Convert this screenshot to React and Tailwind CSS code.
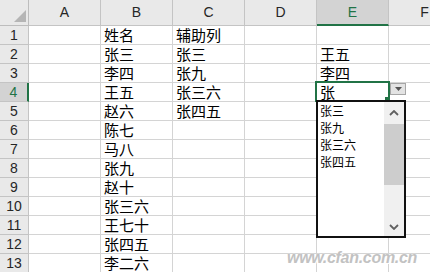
// Excel-style sheet with an open data-validation dropdown on E4
const COLS = ['A', 'B', 'C', 'D', 'E', 'F'];

const ROWS = [
  { B: '姓名', C: '辅助列' },
  { B: '张三', C: '张三', E: '王五' },
  { B: '李四', C: '张九', E: '李四' },
  { B: '王五', C: '张三六', E: '张' },
  { B: '赵六', C: '张四五' },
  { B: '陈七' },
  { B: '马八' },
  { B: '张九' },
  { B: '赵十' },
  { B: '张三六' },
  { B: '王七十' },
  { B: '张四五' },
  { B: '李二六' },
];

const OPTIONS = ['张三', '张九', '张三六', '张四五'];

const cjk = { fontFamily: '"Noto Sans CJK SC", "Liberation Sans", sans-serif' };
const latin = { fontFamily: '"Liberation Sans", Arial, sans-serif' };

function Chevron({ up }) {
  return (
    <svg width="10" height="6" viewBox="0 0 10 6">
      <polyline
        points={up ? '1,5 5,1 9,5' : '1,1 5,5 9,1'}
        fill="none"
        stroke="#606060"
        strokeWidth="1.8"
      />
    </svg>
  );
}

export default function App() {
  return (
    <div className="relative w-[430px] h-[272px] overflow-hidden bg-white select-none">
      <div className="grid grid-cols-[29px_72px_72px_72px_72px_72px_72px] w-[461px]">
        {/* corner */}
        <div className="h-[26px] bg-[#e9e9e9] border-r border-b border-[#bdbdbd] flex items-end justify-end pr-[2px] pb-[3px]">
          <svg width="12" height="12" viewBox="0 0 12 12">
            <polygon points="12,0 12,12 0,12" fill="#b5b5b5" />
          </svg>
        </div>

        {/* column headers */}
        {COLS.map(c => (
          <div
            key={c}
            style={latin}
            className={
              c === 'E'
                ? 'h-[26px] bg-[#d3d3d3] border-r border-[#c4c4c4] border-b-2 border-b-[#217346] text-[#217346] text-[14px] flex items-center justify-center'
                : 'h-[26px] bg-[#e9e9e9] border-r border-b border-[#c4c4c4] text-[#262626] text-[14px] flex items-center justify-center'
            }
          >
            {c}
          </div>
        ))}

        {/* rows */}
        {ROWS.map((row, i) => (
          <div key={i} className="contents">
            <div
              style={latin}
              className={
                i === 3
                  ? 'h-[19px] bg-[#d3d3d3] border-r-2 border-r-[#217346] border-b border-b-[#c4c4c4] text-[#217346] text-[14px] flex items-center justify-center'
                  : 'h-[19px] bg-[#e9e9e9] border-r border-b border-[#c4c4c4] text-[#262626] text-[14px] flex items-center justify-center'
              }
            >
              {i + 1}
            </div>
            {COLS.map(c => (
              <div
                key={c}
                style={cjk}
                className="h-[19px] border-r border-b border-[#d4d4d4] pl-[3px] text-[15px] leading-[18px] text-black whitespace-nowrap"
              >
                {row[c] || ''}
              </div>
            ))}
          </div>
        ))}
      </div>

      {/* active cell E4 */}
      <div className="absolute left-[315px] top-[81px] w-[75px] h-[21px] border-2 border-[#217346]" />
      <div className="absolute left-[385px] top-[97px] w-[5px] h-[5px] bg-[#217346]" />

      {/* dropdown button */}
      <div className="absolute left-[390px] top-[83px] w-[16px] h-[12px] bg-[#e3e3e3] border border-[#a6a6a6] flex items-center justify-center">
        <svg width="7" height="4" viewBox="0 0 7 4">
          <polygon points="0,0 7,0 3.5,4" fill="#555" />
        </svg>
      </div>

      {/* option list */}
      <div className="absolute left-[316px] top-[100px] w-[90px] h-[138px] bg-white border-2 border-[#111] flex">
        <div className="flex-1 pl-[2px]" style={cjk}>
          {OPTIONS.map(o => (
            <div key={o} className="h-[17px] text-[12px] leading-[17px] text-black">
              {o}
            </div>
          ))}
        </div>
        <div className="w-[20px] flex flex-col bg-[#f0f0f0]">
          <div className="h-[22px] flex items-center justify-center">
            <Chevron up />
          </div>
          <div className="h-[61px] bg-[#cdcdcd]" />
          <div className="flex-1 flex items-end justify-center pb-[6px]">
            <Chevron />
          </div>
        </div>
      </div>

      {/* watermark */}
      <div
        className="absolute left-[287px] top-[246px] text-[16px] font-bold italic text-[#c2c2c2] tracking-[-0.3px]"
        style={{ fontFamily: '"Liberation Sans", Arial, sans-serif', textShadow: '0 0 1px #fff, 1px 1px 0 #fff' }}
      >
        www.cfan.com.cn
      </div>
    </div>
  );
}
